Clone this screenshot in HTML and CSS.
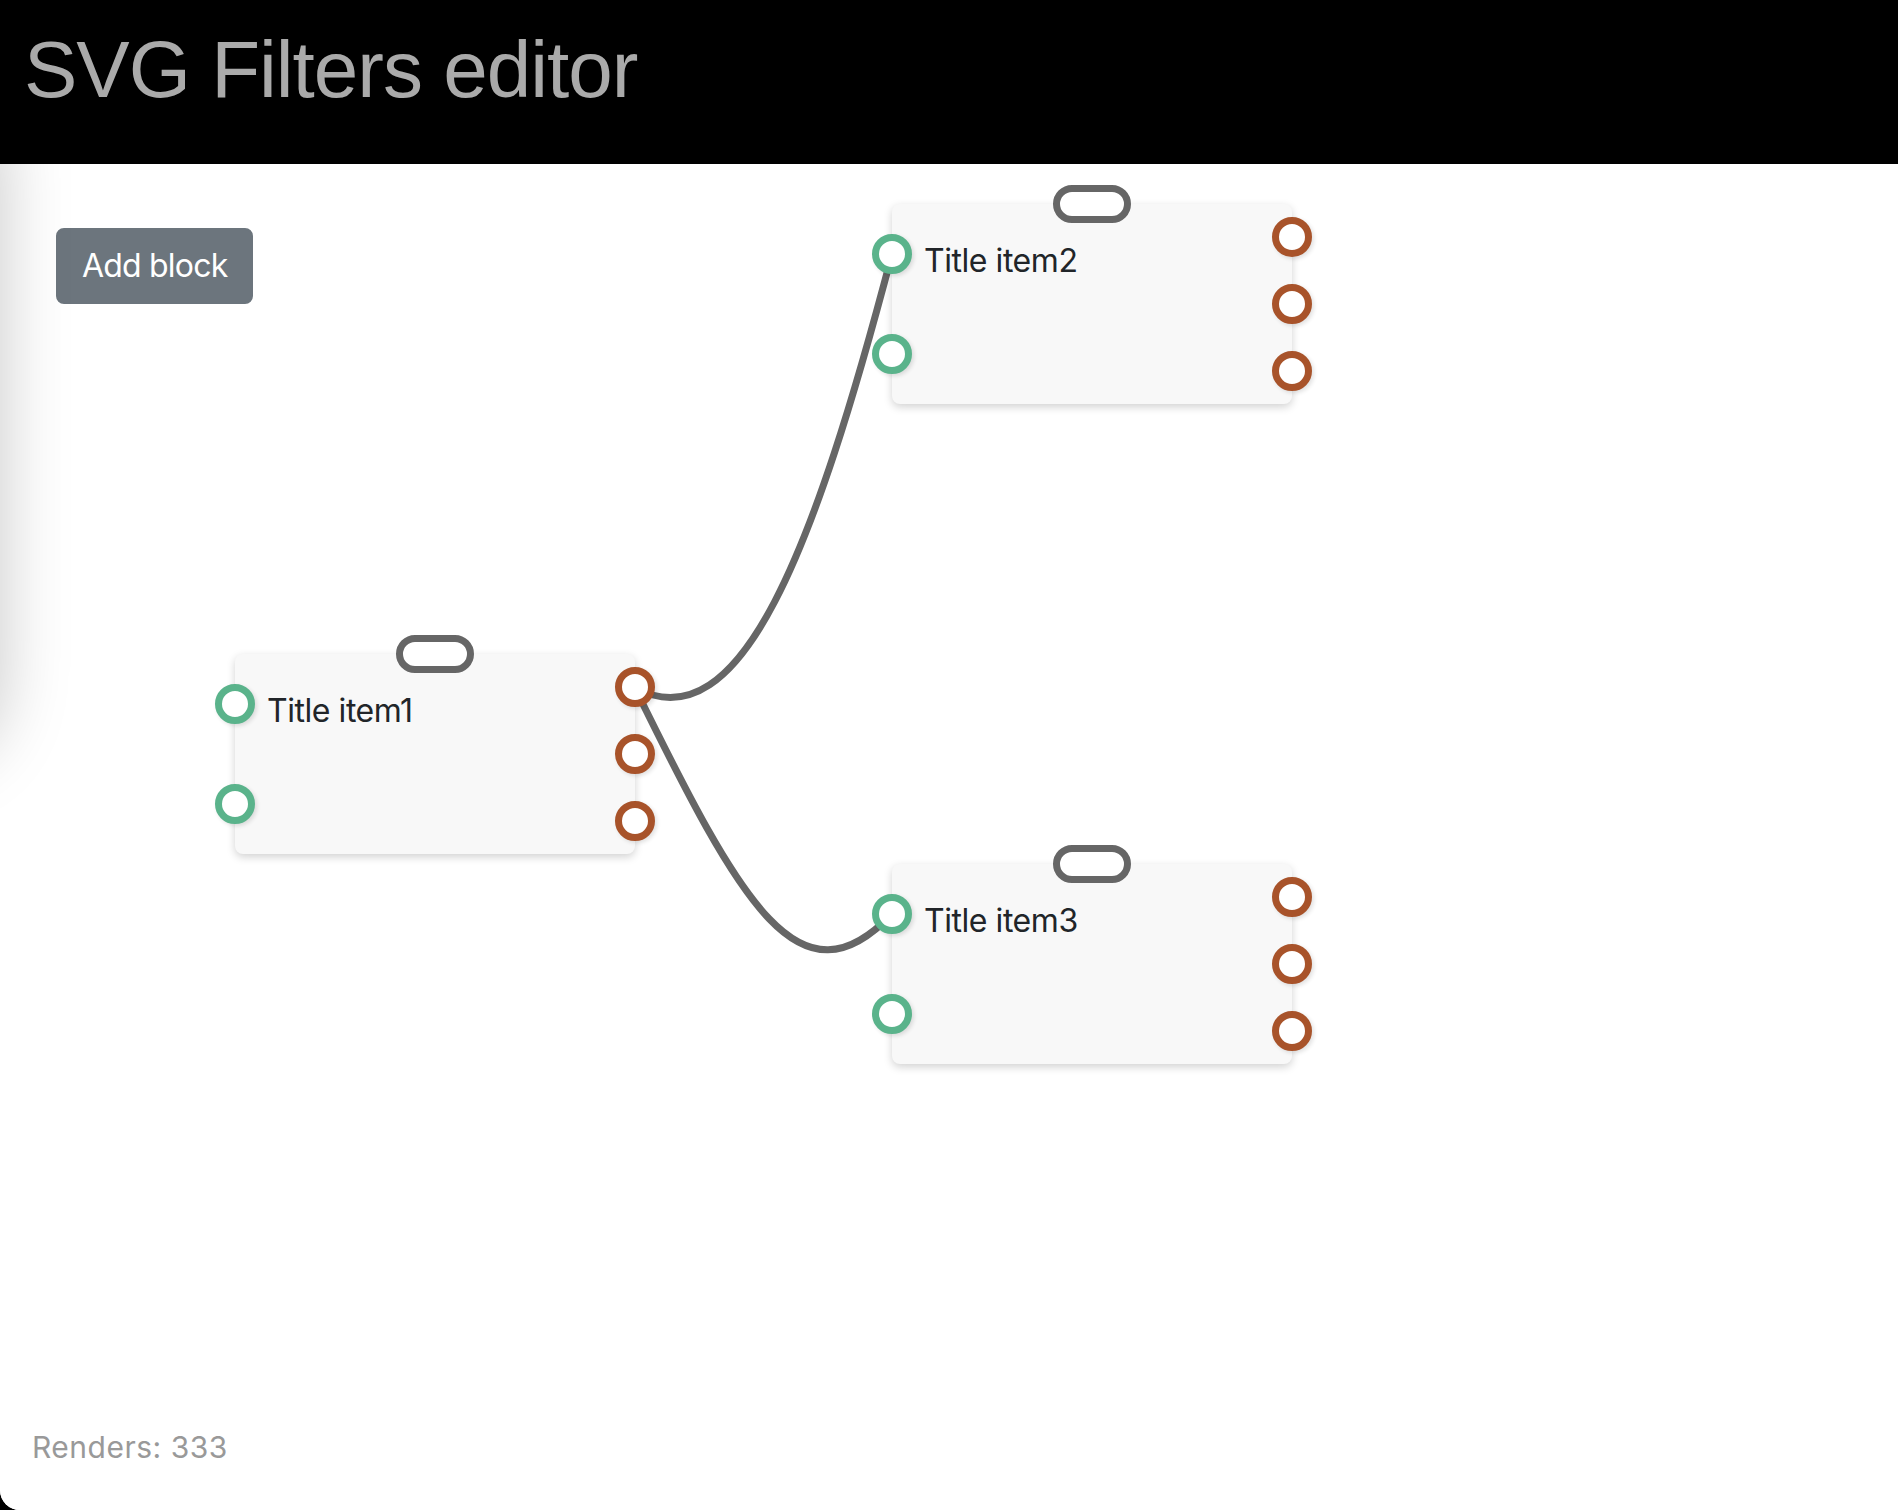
FILE: index.html
```html
<!DOCTYPE html>
<html lang="en">
<head>
<meta charset="utf-8">
<title>SVG Filters editor</title>
<link rel="stylesheet" href="styles.css">
</head>
<body>
<div class="app">
  <header class="topbar">
    <h1 class="brand">SVG Filters editor</h1>
  </header>
  <main class="canvas">
    <div class="side-shadow"></div>
    <div class="toolbar">
      <button class="btn-secondary" type="button">Add block</button>
    </div>
    <svg class="links" width="1898" height="1200" viewBox="0 0 1898 1200">
      <path d="M635 524 C742 580 815 382 892 90" />
      <path d="M635 524 C742 742 800 846 892 750" />
    </svg>

    <div class="node" style="left:235px; top:490px">
      <div class="handle"></div>
      <div class="ports ports-in"><span class="port in"></span><span class="port in"></span></div>
      <div class="node-title">Title item1</div>
      <div class="ports ports-out"><span class="port out"></span><span class="port out"></span><span class="port out"></span></div>
    </div>

    <div class="node" style="left:892px; top:40px">
      <div class="handle"></div>
      <div class="ports ports-in"><span class="port in"></span><span class="port in"></span></div>
      <div class="node-title">Title item2</div>
      <div class="ports ports-out"><span class="port out"></span><span class="port out"></span><span class="port out"></span></div>
    </div>

    <div class="node" style="left:892px; top:700px">
      <div class="handle"></div>
      <div class="ports ports-in"><span class="port in"></span><span class="port in"></span></div>
      <div class="node-title">Title item3</div>
      <div class="ports ports-out"><span class="port out"></span><span class="port out"></span><span class="port out"></span></div>
    </div>
  </main>
  <footer class="stats">Renders: 333</footer>
</div>
</body>
</html>
```

FILE: styles.css
```css
html, body {
  margin: 0;
  padding: 0;
  height: 100%;
  background: #000;
}

body {
  font-family: Inter, "Noto Sans", sans-serif;
  color: #212529;
}

.app {
  min-height: 100vh;
  display: flex;
  flex-direction: column;
  background: #fff;
  border-bottom-left-radius: 20px;
  overflow: hidden;
}

.topbar {
  background: #000;
  height: 164px;
  box-sizing: border-box;
  padding: 22px 24px 0;
}

.brand {
  margin: 0;
  font-family: "Liberation Sans", Arial, sans-serif;
  font-weight: 400;
  font-size: 80px;
  line-height: 96px;
  letter-spacing: -1px;
  color: #aaaaaa;
}

.canvas {
  position: relative;
  flex: 1;
}

.side-shadow {
  position: absolute;
  left: -400px;
  top: -40px;
  width: 400px;
  height: 640px;
  border-bottom-right-radius: 80px;
  box-shadow: 0 0 70px rgba(0, 0, 0, 0.22);
}

.toolbar {
  padding: 64px 56px 0;
}

.btn-secondary {
  font-family: Inter, "Noto Sans", sans-serif;
  font-size: 32px;
  line-height: 48px;
  letter-spacing: -0.8px;
  padding: 12px 24px;
  color: #fff;
  background: #6c757d;
  border: 2px solid #6c757d;
  border-radius: 8px;
}

.links {
  position: absolute;
  left: 0;
  top: 0;
  overflow: visible;
}

.links path {
  fill: none;
  stroke: #666;
  stroke-width: 7;
}

.node {
  position: absolute;
  width: 400px;
  height: 200px;
  box-sizing: border-box;
  padding: 33px 32px 32px;
  background: #f8f8f8;
  border-radius: 8px;
  box-shadow: 0 3px 8px rgba(0, 0, 0, 0.18);
}

.handle {
  position: absolute;
  left: 161px;
  top: -19px;
  width: 64px;
  height: 24px;
  border: 7px solid #666;
  border-radius: 19px;
  background: #fff;
}

.node-title {
  font-size: 32px;
  line-height: 48px;
  letter-spacing: -0.45px;
}

.ports {
  position: absolute;
  top: 0;
  bottom: 0;
  display: flex;
  flex-direction: column;
  justify-content: space-around;
  align-items: center;
}

.ports-in {
  left: -20px;
}

.ports-out {
  right: -20px;
}

.port {
  display: block;
  width: 26px;
  height: 26px;
  border-radius: 50%;
  background: #fff;
  border: 7px solid;
  box-shadow: 2px 2px 4px rgba(0, 0, 0, 0.12);
}

.port.in {
  border-color: #5ab38b;
}

.port.out {
  border-color: #a8532a;
}

.stats {
  padding: 0 32px 42px;
  font-size: 30px;
  line-height: 42px;
  letter-spacing: 0.5px;
  color: #999;
  background: #fff;
}
```
